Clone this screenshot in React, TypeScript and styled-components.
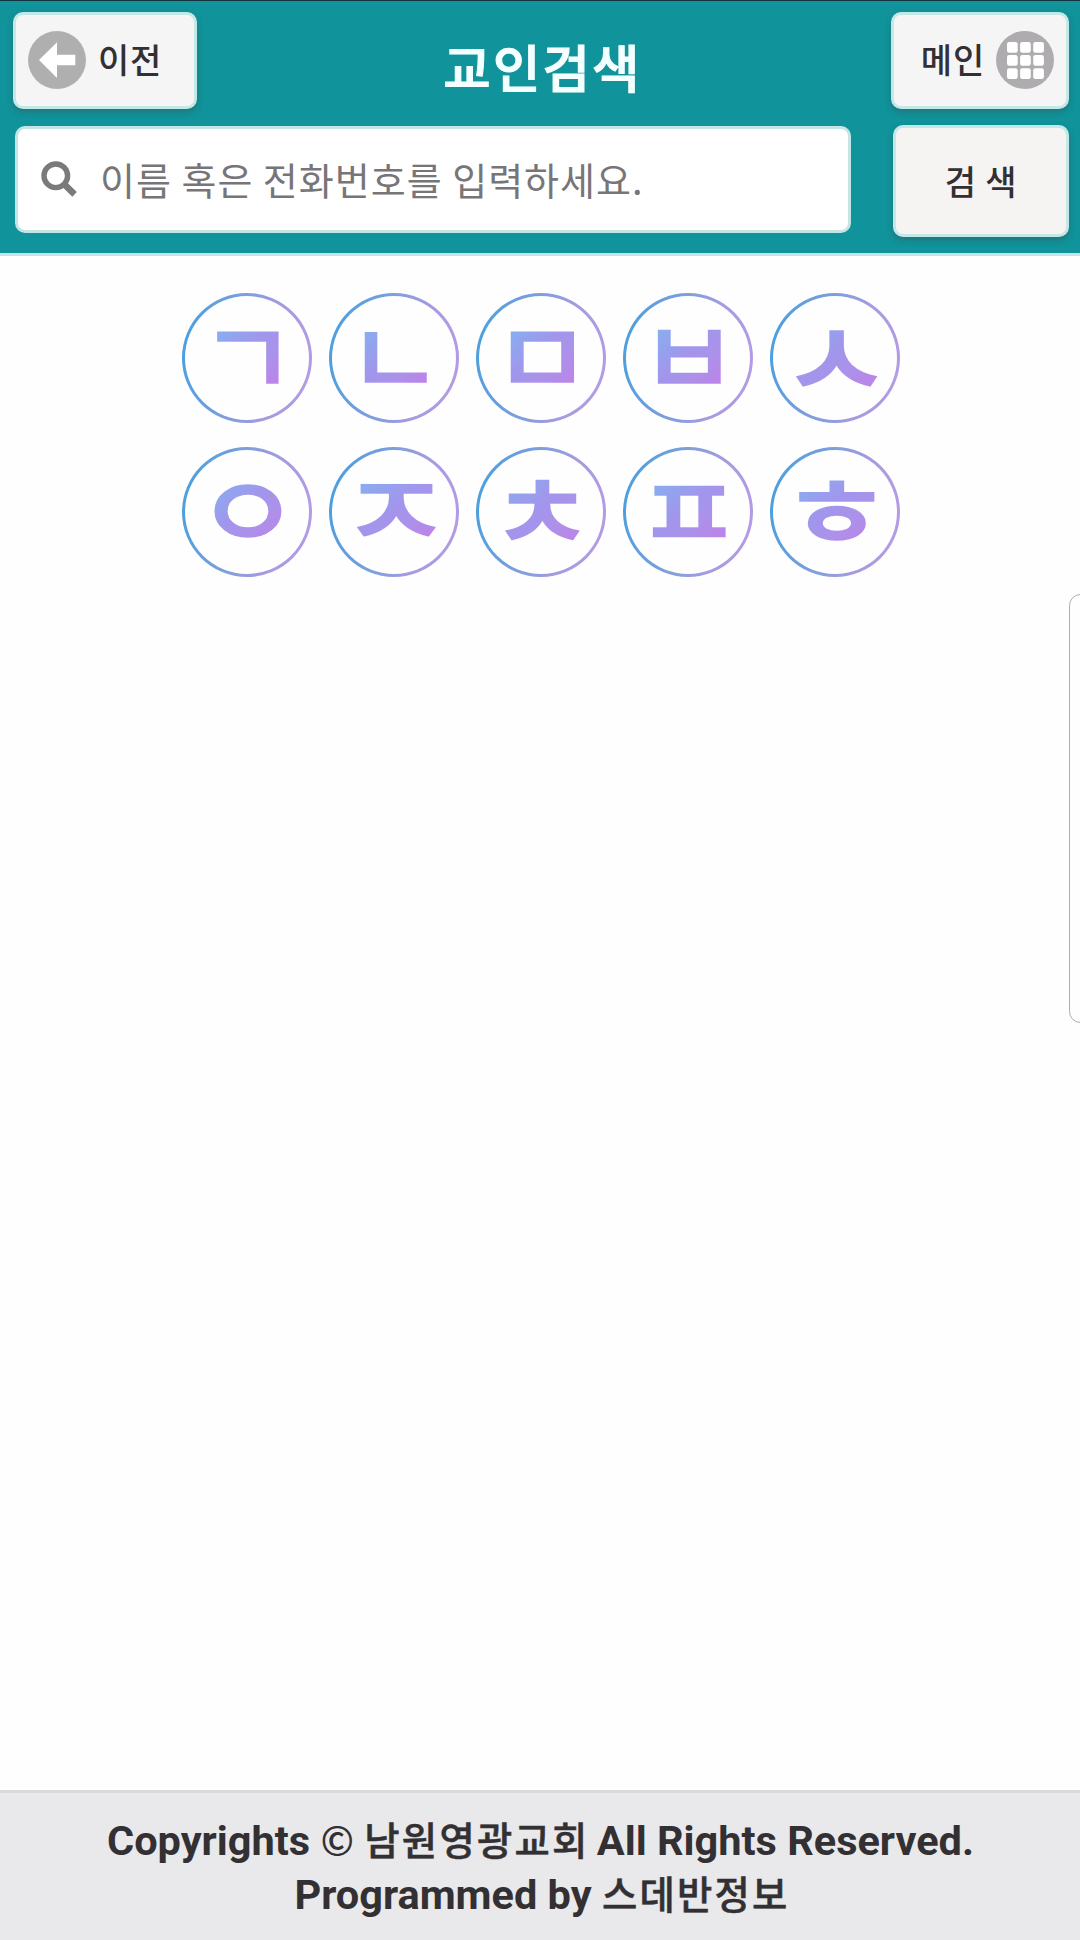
import React from "react";
import styled, { createGlobalStyle } from "styled-components";

const KR = `"Noto Sans CJK KR", sans-serif`;

const Global = createGlobalStyle`
  *, *::before, *::after { box-sizing: border-box; }
  html, body { margin: 0; background: #fefefe; }
`;

const Screen = styled.div`
  position: relative;
  display: flex;
  flex-direction: column;
  width: 1080px;
  height: 1940px;
  overflow: hidden;
  font-family: Roboto, ${KR};
  color: #333033;
  background: #fefefe;
`;

const Header = styled.header`
  display: flex;
  flex-direction: column;
  height: 256px;
  padding: 11px 11px 0 13px;
  background: #10939a;
  border-top: 1px solid #12333d;
  border-bottom: 3px solid #c3e5e5;
`;

const Bar = styled.div<{ $height: number }>`
  display: flex;
  justify-content: space-between;
  align-items: flex-start;
  height: ${p => p.$height}px;
`;

const Button = styled.button<{ $width: number; $height: number; $align?: string; $gap?: number; $tone?: string }>`
  display: flex;
  align-items: center;
  justify-content: ${p => p.$align ?? "center"};
  gap: ${p => p.$gap ?? 0}px;
  width: ${p => p.$width}px;
  height: ${p => p.$height}px;
  padding: 0 12px;
  background: ${p => p.$tone ?? "#f6f5f6"};
  border: 3px solid #c3e8e8;
  border-radius: 10px;
  box-shadow: 0 3px 6px rgba(70, 60, 70, 0.35);
  color: #333033;
`;

const ButtonText = styled.span<{ $lift?: number }>`
  margin-bottom: ${p => p.$lift ?? 3}px;
  font: 500 34px/40px ${KR};
  letter-spacing: 0.8px;
  white-space: pre;
`;

const IconSvg = styled.svg<{ $lift?: number }>`
  display: block;
  flex: none;
  margin-bottom: ${p => p.$lift ?? 1}px;
`;

const Title = styled.h1`
  margin: 5px 3px 0 0;
  font: 500 51.5px/97px ${KR};
  letter-spacing: 2.2px;
  color: #f4ffff;
  -webkit-text-stroke: 1.2px currentColor;
`;

const Field = styled.label`
  display: flex;
  align-items: center;
  gap: 23px;
  width: 836px;
  height: 107px;
  margin: 1px 0 0 2px;
  padding-left: 23px;
  background: #fff;
  border: 3px solid #c3e5e5;
  border-radius: 10px;
`;

const Input = styled.input`
  flex: 1;
  min-width: 0;
  margin-bottom: 2px;
  padding: 0;
  border: 0;
  outline: 0;
  background: none;
  font: 400 38px/60px ${KR};
  letter-spacing: 1px;
  &::placeholder { color: #777577; opacity: 1; }
`;

const Index = styled.main`
  display: grid;
  grid-template-columns: repeat(5, 130px);
  grid-auto-rows: 130px;
  justify-content: center;
  gap: 24px 17px;
  padding: 37px 0 0 1px;
`;

const Circle = styled.a`
  display: flex;
  align-items: center;
  justify-content: center;
  border: 3px solid transparent;
  border-radius: 50%;
  background:
    linear-gradient(#fefefe, #fefefe) padding-box,
    linear-gradient(100deg, #4a9fdf 5%, #7d9fdc 42%, #a99ae0 70%, #b59ce6) border-box;
`;

type Box = [left: number, right: number, top: number, bottom: number];

/* ink: glyph bounds inside its 92x100 cell; fit: bounds wanted inside the 130px circle */
const Letter = styled.span<{ $ink: Box; $fit: Box }>`
  flex: none;
  width: 92px;
  height: 100px;
  font: 500 100px/100px ${KR};
  color: transparent;
  -webkit-text-stroke: 1.6px transparent;
  ${({ $ink: [l, r, t, b], $fit: [fl, fr, ft, fb] }) => `
    background: linear-gradient(135deg, #86b0f0, #a295ec 45%, #ab92ea 65%, #c080e8) no-repeat;
    background-size: ${r - l + 4}px ${b - t + 4}px;
    background-position: ${l - 2}px ${t - 2}px;
    transform-origin: ${(l + r) / 2}px ${(t + b) / 2}px;
    transform:
      translate(${(fl + fr) / 2 - 20 - (l + r) / 2}px, ${(ft + fb) / 2 - 13.7 - (t + b) / 2}px)
      scale(${(1.02 * (fr - fl)) / (r - l)}, ${(1.02 * (fb - ft)) / (b - t)});
  `}
  -webkit-background-clip: text;
  background-clip: text;
`;

const EdgePanel = styled.aside`
  position: absolute;
  top: 594px;
  right: -12px;
  width: 23px;
  height: 429px;
  border: 1.5px solid #aeacae;
  border-radius: 16px;
  background: #fefefe;
`;

const Footer = styled.footer`
  height: 150px;
  margin-top: auto;
  padding: 21px 0 0 1px;
  background: #e9e8ea;
  border-top: 3px solid #dadadb;
  text-align: center;
  font: 700 41.5px/54px Roboto, ${KR};
`;

const Hangul = styled.span`
  margin-right: -3px;
  font: 500 38.4px/1 ${KR};
  letter-spacing: 2.2px;
  -webkit-text-stroke: 0.5px currentColor;
`;

const Mark = styled.span`
  font: 500 40px/1 ${KR};
`;

const letters: { char: string; ink: Box; fit: Box }[] = [
  { char: "ㄱ", ink: [16, 76, 31, 82], fit: [36, 97.5, 38.5, 90.5] },
  { char: "ㄴ", ink: [16, 77, 30, 80], fit: [36.5, 98.5, 38, 88.5] },
  { char: "ㅁ", ink: [16, 76, 31, 81], fit: [35.5, 98.5, 38.7, 89] },
  { char: "ㅂ", ink: [16, 76, 29, 81], fit: [35.5, 98.5, 37, 90] },
  { char: "ㅅ", ink: [12, 80, 29, 83], fit: [27.2, 107.2, 36.3, 92.3] },
  { char: "ㅇ", ink: [16, 76, 29, 83], fit: [33.5, 100.2, 36.3, 90] },
  { char: "ㅈ", ink: [13, 79, 30, 83], fit: [28.2, 107.2, 38, 89.7] },
  { char: "ㅊ", ink: [12, 80, 23, 84], fit: [29.5, 105.2, 31.7, 92] },
  { char: "ㅍ", ink: [14, 78, 30, 82], fit: [30.8, 102.8, 38.3, 89.3] },
  { char: "ㅎ", ink: [15, 77, 22, 87], fit: [30.5, 104.2, 31.7, 93] },
];

const BackIcon = () => (
  <IconSvg width="58" height="58" viewBox="0 0 58 58">
    <circle cx="29" cy="29" r="29" fill="#afafaf" />
    <path d="M11 29 29 11.3V23.7H47.3V34.3H29V47Z" fill="#fff" />
  </IconSvg>
);

const GridIcon = () => (
  <IconSvg width="58" height="58" viewBox="0 0 58 58">
    <circle cx="29" cy="29" r="29" fill="#aeacaf" />
    {[11, 24.1, 37.2].map(y =>
      [11, 24.1, 37.2].map(x => (
        <rect key={`${x}-${y}`} x={x} y={y} width="10.7" height="10.7" rx="2.2" fill="#fff" />
      ))
    )}
  </IconSvg>
);

const SearchIcon = () => (
  <IconSvg width="36" height="36" viewBox="0 0 36 36" fill="none" stroke="#7b797b">
    <circle cx="14.8" cy="14.8" r="11.8" strokeWidth="5.4" />
    <path d="M22.6 22.6 33.6 33.4" strokeWidth="6.4" />
  </IconSvg>
);

export default function App() {
  return (
    <Screen>
      <Global />
      <Header>
        <Bar $height={113}>
          <Button $width={184} $height={97} $align="flex-start" $gap={12}>
            <BackIcon />
            <ButtonText>이전</ButtonText>
          </Button>
          <Title>교인검색</Title>
          <Button $width={178} $height={97} $align="flex-end" $gap={11}>
            <ButtonText>메인</ButtonText>
            <GridIcon />
          </Button>
        </Bar>
        <Bar $height={112}>
          <Field>
            <SearchIcon />
            <Input placeholder="이름 혹은 전화번호를 입력하세요." />
          </Field>
          <Button $width={176} $height={112} $tone="#f5f4f3">
            <ButtonText $lift={1}>검 색</ButtonText>
          </Button>
        </Bar>
      </Header>
      <Index>
        {letters.map(({ char, ink, fit }) => (
          <Circle key={char}>
            <Letter $ink={ink} $fit={fit}>{char}</Letter>
          </Circle>
        ))}
      </Index>
      <EdgePanel />
      <Footer>
        Copyrights <Mark>©</Mark> <Hangul>남원영광교회</Hangul> All Rights Reserved.
        <br />
        Programmed by <Hangul>스데반정보</Hangul>
      </Footer>
    </Screen>
  );
}
